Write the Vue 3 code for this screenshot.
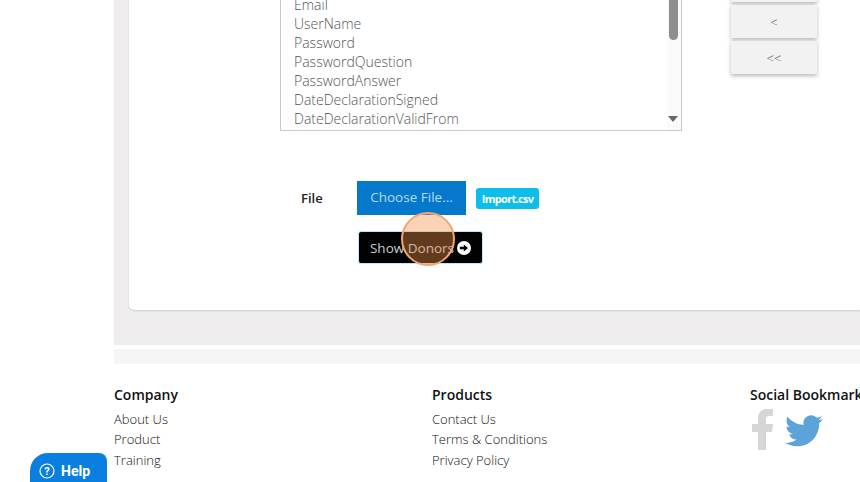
<script setup>
const fields = [
  'Email',
  'UserName',
  'Password',
  'PasswordQuestion',
  'PasswordAnswer',
  'DateDeclarationSigned',
  'DateDeclarationValidFrom',
];

const footerCols = [
  { title: 'Company', links: ['About Us', 'Product', 'Training'] },
  { title: 'Products', links: ['Contact Us', 'Terms & Conditions', 'Privacy Policy'] },
];
</script>

<template>
  <div class="page">
    <div class="panel">
      <div class="card">
        <div class="picker">
          <div class="listbox">
            <ul class="options">
              <li v-for="f in fields" :key="f">{{ f }}</li>
            </ul>
            <div class="scrollbar">
              <div class="thumb"></div>
              <div class="arrow"></div>
            </div>
          </div>
          <div class="moves">
            <button class="move stub"></button>
            <button class="move">&lt;</button>
            <button class="move">&lt;&lt;</button>
          </div>
        </div>

        <div class="file-row">
          <span class="file-label">File</span>
          <span class="choose">Choose File...</span>
          <span class="badge">Import.csv</span>
        </div>

        <div class="donors-wrap">
          <button class="donors">
            Show Donors
            <svg class="arrow-icon" viewBox="0 0 14 14" width="14" height="14">
              <circle cx="7" cy="7" r="7" fill="#fff" />
              <path d="M2.8 5.7h4V3.4L11 7l-4.200 3.600V8.300h-4z" fill="#000" />
            </svg>
          </button>
          <span class="click-mark"></span>
        </div>
      </div>
    </div>

    <div class="strip"></div>

    <footer class="footer">
      <div v-for="col in footerCols" :key="col.title" class="col">
        <h4>{{ col.title }}</h4>
        <a v-for="l in col.links" :key="l">{{ l }}</a>
      </div>
      <div class="col social">
        <h4>Social Bookmark</h4>
        <div class="icons">
          <svg viewBox="0 0 21 41" width="21" height="41">
            <path d="M6 41V23H0v-8h6V9c0-6 4-9 9-9h6v7h-4c-2.500 0-3 1.500-3 3v5h7l-1 8h-6v18z" fill="#d6d6d6" />
          </svg>
          <svg class="bird" viewBox="0 0 24 20" width="38" height="32">
            <path transform="translate(0 -2.100)" d="M23.953 4.570a10 10 0 01-2.825.775 4.958 4.958 0 002.163-2.723c-.951.555-2.005.959-3.127 1.184a4.920 4.920 0 00-8.384 4.482C7.690 8.095 4.067 6.130 1.640 3.162a4.822 4.822 0 00-.666 2.475c0 1.710.870 3.213 2.188 4.096a4.904 4.904 0 01-2.228-.616v.060a4.923 4.923 0 003.946 4.827 4.996 4.996 0 01-2.212.085 4.936 4.936 0 004.604 3.417 9.867 9.867 0 01-6.102 2.105c-.390 0-.779-.023-1.170-.067a13.995 13.995 0 007.557 2.209c9.053 0 13.998-7.496 13.998-13.985 0-.210 0-.420-.015-.630A9.935 9.935 0 0024 4.590z" fill="#5ba3d9" />
          </svg>
        </div>
      </div>
    </footer>

    <button class="help">
      <svg viewBox="0 0 16 16" width="16" height="16">
        <circle cx="8" cy="8" r="7" fill="none" stroke="#fff" stroke-width="1.200" />
        <text x="8" y="12" text-anchor="middle" font-size="11" font-weight="700" fill="#fff" font-family="Roboto, sans-serif">?</text>
      </svg>
      Help
    </button>
  </div>
</template>

<style scoped>
.page {
  position: relative;
  width: 860px;
  height: 482px;
  overflow: hidden;
  background: #fff;
  font-family: "Open Sans", "Liberation Sans", sans-serif;
}
.panel {
  margin-left: 114px;
  height: 345px;
  padding: 0 0 35px 15px;
  box-sizing: border-box;
  background: #efeded;
}
.card {
  height: 310px;
  padding-left: 151px;
  box-sizing: border-box;
  background: #fff;
  border-radius: 0 0 0 5px;
  box-shadow: 0 1px 2px rgba(0, 0, 0, 0.14);
}
.picker {
  display: flex;
  align-items: flex-start;
  gap: 49px;
  height: 131px;
}
.listbox {
  display: flex;
  justify-content: space-between;
  width: 402px;
  height: 131px;
  box-sizing: border-box;
  border: 1px solid #c9c9c9;
  border-top: 0;
  overflow: hidden;
}
.options {
  list-style: none;
  margin: -5px 0 0;
  padding: 0 0 0 13px;
  font-size: 14px;
  font-weight: 300;
  line-height: 19px;
  color: #555;
}
.scrollbar {
  position: relative;
  width: 14px;
  background: #fafafa;
}
.thumb {
  width: 9px;
  height: 40px;
  margin-left: 2px;
  background: #8e8e8e;
  border-radius: 0 0 5px 5px;
}
.arrow {
  position: absolute;
  left: 1px;
  bottom: 8px;
  border-left: 5px solid transparent;
  border-right: 5px solid transparent;
  border-top: 6px solid #6a6a6a;
}
.moves {
  display: flex;
  flex-direction: column;
  gap: 3px;
  margin-top: -31px;
}
.move {
  width: 86px;
  height: 33px;
  border: 0;
  padding: 0;
  background: #f2f2f2;
  color: #555;
  font-family: inherit;
  font-size: 13px;
  font-weight: 300;
  box-shadow: 0 2px 4px rgba(0, 0, 0, 0.28);
}
.file-row {
  display: flex;
  align-items: center;
  height: 34px;
  margin-top: 50px;
  margin-left: 21px;
}
.file-label {
  width: 56px;
  font-size: 13px;
  font-weight: 600;
  color: #222;
}
.choose {
  width: 109px;
  height: 34px;
  line-height: 33px;
  text-align: center;
  background: #0678cb;
  color: #b5dcf5;
  font-size: 13.500px;
}
.badge {
  margin-left: 10px;
  width: 63px;
  height: 21px;
  line-height: 21px;
  text-align: center;
  background: #0dbdec;
  border-radius: 3px;
  color: #fff;
  font-size: 11px;
  font-weight: 700;
  letter-spacing: -0.7px;
}
.donors-wrap {
  position: relative;
  margin: 16px 0 0 78px;
  width: 125px;
}
.donors {
  display: flex;
  align-items: center;
  justify-content: center;
  gap: 3px;
  width: 125px;
  height: 33px;
  padding: 0;
  background: #020202;
  border: 1px solid #bfe9f3;
  border-radius: 3px;
  color: #c3d0d5;
  font-family: inherit;
  font-size: 13.500px;
}
.arrow-icon {
  flex: none;
}
.click-mark {
  position: absolute;
  left: 43px;
  top: -19px;
  width: 54px;
  height: 54px;
  box-sizing: border-box;
  border-radius: 50%;
  background: rgba(243, 146, 75, 0.4);
  border: 2px solid #f0a672;
}
.strip {
  margin: 4px 0 0 114px;
  height: 15px;
  background: #f5f5f6;
}
.footer {
  display: grid;
  grid-template-columns: 318px 318px 1fr;
  margin: 21px 0 0 114px;
}
.col h4 {
  margin: 0 0 3.500px;
  height: 20px;
  line-height: 20px;
  font-size: 14px;
  font-weight: 600;
  color: #111;
  white-space: nowrap;
}
.col a {
  display: block;
  height: 20.500px;
  line-height: 20px;
  font-size: 13px;
  font-weight: 300;
  color: #111;
  white-space: nowrap;
}
.icons {
  display: flex;
  align-items: center;
  margin: 3px 0 0 2px;
}
.bird {
  margin-left: 12px;
  margin-top: 4px;
}
.help {
  position: absolute;
  left: 30px;
  top: 453px;
  display: flex;
  align-items: center;
  gap: 6px;
  width: 77px;
  height: 36px;
  padding: 0 0 1px 9px;
  border: 0;
  border-radius: 18px 8px 0 0;
  background: #0a7fdf;
  color: #fff;
  font-family: Roboto, "Liberation Sans", sans-serif;
  font-size: 14px;
  font-weight: 700;
}
</style>
